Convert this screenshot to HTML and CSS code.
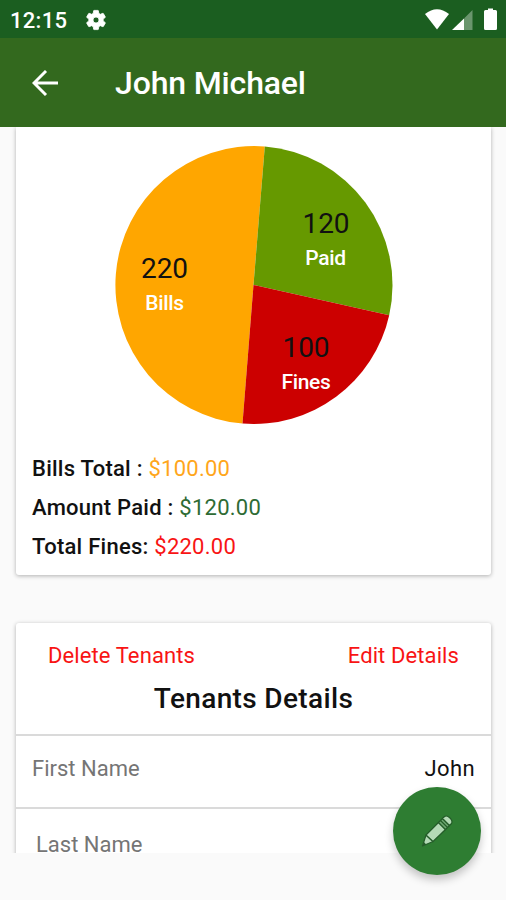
FILE: index.html
```html
<!DOCTYPE html>
<html lang="en">
<head>
    <meta charset="UTF-8">
    <meta name="viewport" content="width=device-width, initial-scale=1.0">
    <title>John Michael</title>
    <link rel="stylesheet" href="styles.css">
</head>
<body>
    <div class="status">
        <span class="hora">12:15</span>
        <svg class="gear" width="24" height="24" viewBox="0 0 24 24"><path fill="#fff" stroke="#fff" stroke-width=".8" d="M19.14 12.94c.04-.3.06-.61.06-.94s-.02-.64-.07-.94l2.03-1.58a.49.49 0 0 0 .12-.61l-1.92-3.32a.49.49 0 0 0-.59-.22l-2.39.96a7 7 0 0 0-1.62-.94l-.36-2.54a.48.48 0 0 0-.48-.41h-3.84a.47.47 0 0 0-.47.41l-.36 2.54a7.4 7.4 0 0 0-1.62.94l-2.39-.96a.48.48 0 0 0-.59.22L2.74 8.87a.47.47 0 0 0 .12.61l2.03 1.58a6 6 0 0 0-.02 1.88l-2.03 1.58a.49.49 0 0 0-.12.61l1.92 3.32c.12.22.37.29.59.22l2.39-.96c.5.38 1.03.7 1.62.94l.36 2.54c.05.24.24.41.48.41h3.84c.24 0 .44-.17.47-.41l.36-2.54a7.4 7.4 0 0 0 1.62-.94l2.39.96c.22.08.47 0 .59-.22l1.92-3.32a.47.47 0 0 0-.12-.61zM12 15a3 3 0 1 1 0-6 3 3 0 0 1 0 6z"/></svg>
        <svg class="signals" width="74" height="24" viewBox="0 0 74 24">
            <path fill="#fff" d="M0 6Q12-3.500 24 6L12 21.500z"/>
            <path fill="#fff" d="M27 22L39 10.500V22z"/>
            <path fill="#fff" fill-opacity=".35" d="M39 10.500L47.500 2V22H39z"/>
            <path fill="#fff" d="M60.500 2H63V.5h5V2h2.500A1.500 1.500 0 0 1 72 3.500v17a1.500 1.500 0 0 1-1.500 1.500h-10a1.500 1.500 0 0 1-1.500-1.500v-17A1.500 1.500 0 0 1 60.500 2z"/>
        </svg>
    </div>
    <header>
        <svg class="back" width="26" height="26" viewBox="0 0 26 26"><path fill="none" stroke="#fff" stroke-width="2.900" d="M26 13H2M14 1L2 13l12 12"/></svg>
        <h1>John Michael</h1>
    </header>
    <main>
        <section class="card resumo">
            <svg class="pie" width="280" height="280" viewBox="0 0 280 280">
                <path fill="#ffa600" d="M139.500 140L128.500 278.600A139 139 0 0 1 150.800 1.500z"/>
                <path fill="#669900" d="M139.500 140L150.800 1.500A139 139 0 0 1 275.200 170.200z"/>
                <path fill="#cc0000" d="M139.500 140L275.200 170.200A139 139 0 0 1 128.500 278.600z"/>
                <text class="valor" x="50.500" y="133">220</text>
                <text class="rotulo" x="50.500" y="165">Bills</text>
                <text class="valor" x="212" y="88">120</text>
                <text class="rotulo" x="211.500" y="119.500">Paid</text>
                <text class="valor" x="192" y="212">100</text>
                <text class="rotulo" x="192" y="244">Fines</text>
            </svg>
            <p><b>Bills Total :</b> <span class="orange">$100.00</span></p>
            <p><b>Amount Paid :</b> <span class="green">$120.00</span></p>
            <p><b>Total Fines:</b> <span class="red">$220.00</span></p>
        </section>
        <section class="card detalhes">
            <div class="links">
                <span>Delete Tenants</span>
                <span>Edit Details</span>
            </div>
            <h2>Tenants Details</h2>
            <div class="linha"><span>First Name</span><span class="nome">John</span></div>
            <div class="linha last"><span>Last Name</span></div>
        </section>
    </main>
    <div class="fab">
        <svg width="34" height="34" viewBox="0 0 34 34">
            <g fill="#b4dab6" stroke="#245c29" stroke-width="1.200" stroke-linejoin="round">
                <path d="M2.500 32L6 21l7 6.500z"/>
                <path d="M6 21L18.500 8.500l7 7L13 27.500z"/>
                <path fill="#6fa873" d="M18.500 8.500l4-4 7 7-4 4z"/>
                <path d="M22.500 4.500l2-2q2.500-1.500 5.500 1.500t1.500 5.500l-2 2z"/>
                <path fill="none" d="M20.500 6.500l7 7"/>
            </g>
            <path fill="#245c29" d="M2.500 32l1.300-4 2.500 2.400z"/>
        </svg>
    </div>
</body>
</html>
```

FILE: styles.css
```css
body {
    margin: 0;
    height: 900px;
    overflow: hidden;
    background-color: #fafafa;
    font-family: Roboto, Arial, Helvetica, sans-serif;
    font-size: 22px;
    color: #111;
}

svg {
    display: block;
}

.status {
    display: flex;
    align-items: center;
    box-sizing: border-box;
    height: 38px;
    padding: 2px 6px 0 10px;
    background-color: #1b5e20;
    color: white;
}

.hora {
    width: 74px;
    font-weight: 500;
    letter-spacing: 0.3px;
}

.signals {
    margin-left: auto;
    margin-right: 1px;
}

header {
    display: flex;
    align-items: center;
    height: 89px;
    padding-left: 32px;
    background-color: #33691e;
    color: white;
}

h1 {
    margin: 1px 0 0 57px;
    font-size: 32px;
    font-weight: 500;
    letter-spacing: -0.15px;
}

main {
    height: 726px;
    overflow: hidden;
}

.card {
    box-sizing: border-box;
    width: 475px;
    margin-left: 16px;
    background: white;
    border-radius: 3px;
    box-shadow: 0 1px 4px rgba(0, 0, 0, 0.3);
}

.resumo {
    height: 448px;
    padding: 18px 16px 0;
    border-radius: 0 0 3px 3px;
}

.pie {
    margin: 0 0 24px 82px;
}

.pie text {
    text-anchor: middle;
}

.valor {
    font-size: 28px;
    fill: #111;
}

.rotulo {
    font-size: 21px;
    font-weight: 500;
    letter-spacing: -0.3px;
    fill: white;
}

p {
    margin: 0;
    line-height: 39px;
    letter-spacing: 0.25px;
}

b {
    font-weight: 500;
}

.orange {
    color: #ffa61a;
}

.green {
    color: #2e6b34;
}

.red {
    color: #f81414;
}

.detalhes {
    height: 300px;
    margin-top: 48px;
    padding-top: 17px;
}

.links {
    display: flex;
    justify-content: space-between;
    padding: 0 32px;
    line-height: 32px;
    letter-spacing: 0.1px;
    color: #f81414;
}

h2 {
    margin: 0;
    height: 62px;
    font-size: 28px;
    font-weight: 500;
    line-height: 54px;
    letter-spacing: 0.35px;
    text-align: center;
}

.linha {
    display: flex;
    justify-content: space-between;
    height: 71px;
    padding: 0 16px;
    border-top: 2px solid #dadada;
    line-height: 66px;
    color: #757575;
}

.last {
    padding-left: 20px;
    line-height: 72px;
}

.nome {
    letter-spacing: 0.4px;
    color: #111;
}

/* floating edit button */
.fab {
    position: absolute;
    left: 393px;
    top: 787px;
    display: flex;
    align-items: center;
    justify-content: center;
    width: 88px;
    height: 88px;
    border-radius: 50%;
    background-color: #2e7d32;
    box-shadow: 0 5px 9px rgba(0, 0, 0, 0.22);
}
```
